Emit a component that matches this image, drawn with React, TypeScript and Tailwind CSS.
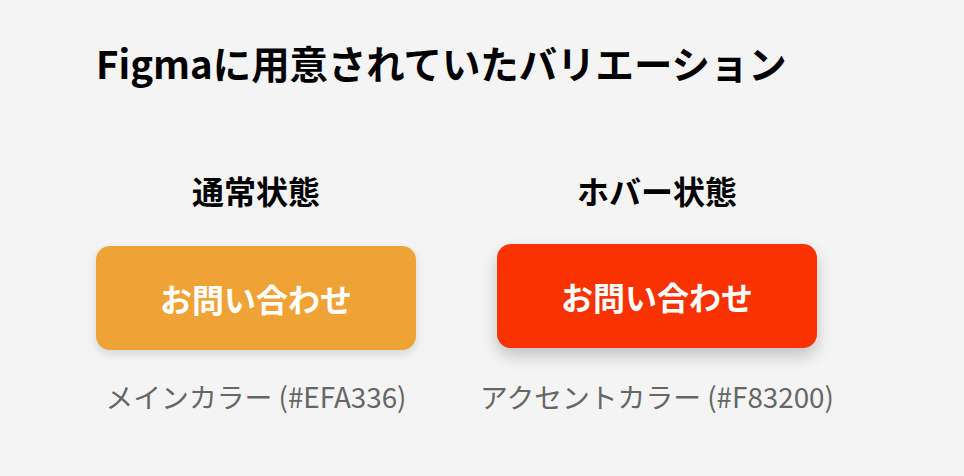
import React from "react";

type Variant = {
  label: string;
  caption: string;
  className: string;
};

const variants: Variant[] = [
  {
    label: "通常状態",
    caption: "メインカラー (#EFA336)",
    className:
      "mt-[36px] mb-[1px] bg-[#EFA336] shadow-[0_4px_10px_rgba(0,0,0,0.12)]",
  },
  {
    label: "ホバー状態",
    caption: "アクセントカラー (#F83200)",
    className:
      "mt-[34px] mb-[3px] bg-[#F83200] shadow-[0_8px_16px_rgba(0,0,0,0.2)]",
  },
];

const App: React.FunctionComponent = () => {
  return (
    <div className="min-h-screen bg-[#f4f4f4] px-[96px] pt-[38px] font-['Noto_Sans_CJK_JP','Noto_Sans',sans-serif]">
      <h1 className="text-[38.4px] font-bold leading-[48px] text-black">
        Figmaに用意されていたバリエーション
      </h1>

      <div className="mt-[84px] flex items-start gap-[64px]">
        {variants.map((v) => (
          <div key={v.label} className="flex flex-col items-center">
            <h2 className="text-[32px] font-bold leading-[40px] text-black">
              {v.label}
            </h2>
            <button
              className={
                "flex h-[104px] w-[320px] items-center justify-center rounded-[14px] text-[32px] font-bold text-white " +
                v.className
              }
            >
              お問い合わせ
            </button>
            <p className="mt-[29px] text-[27.8px] leading-[32px] text-[#666]">
              {v.caption}
            </p>
          </div>
        ))}
      </div>
    </div>
  );
};

export default App;
